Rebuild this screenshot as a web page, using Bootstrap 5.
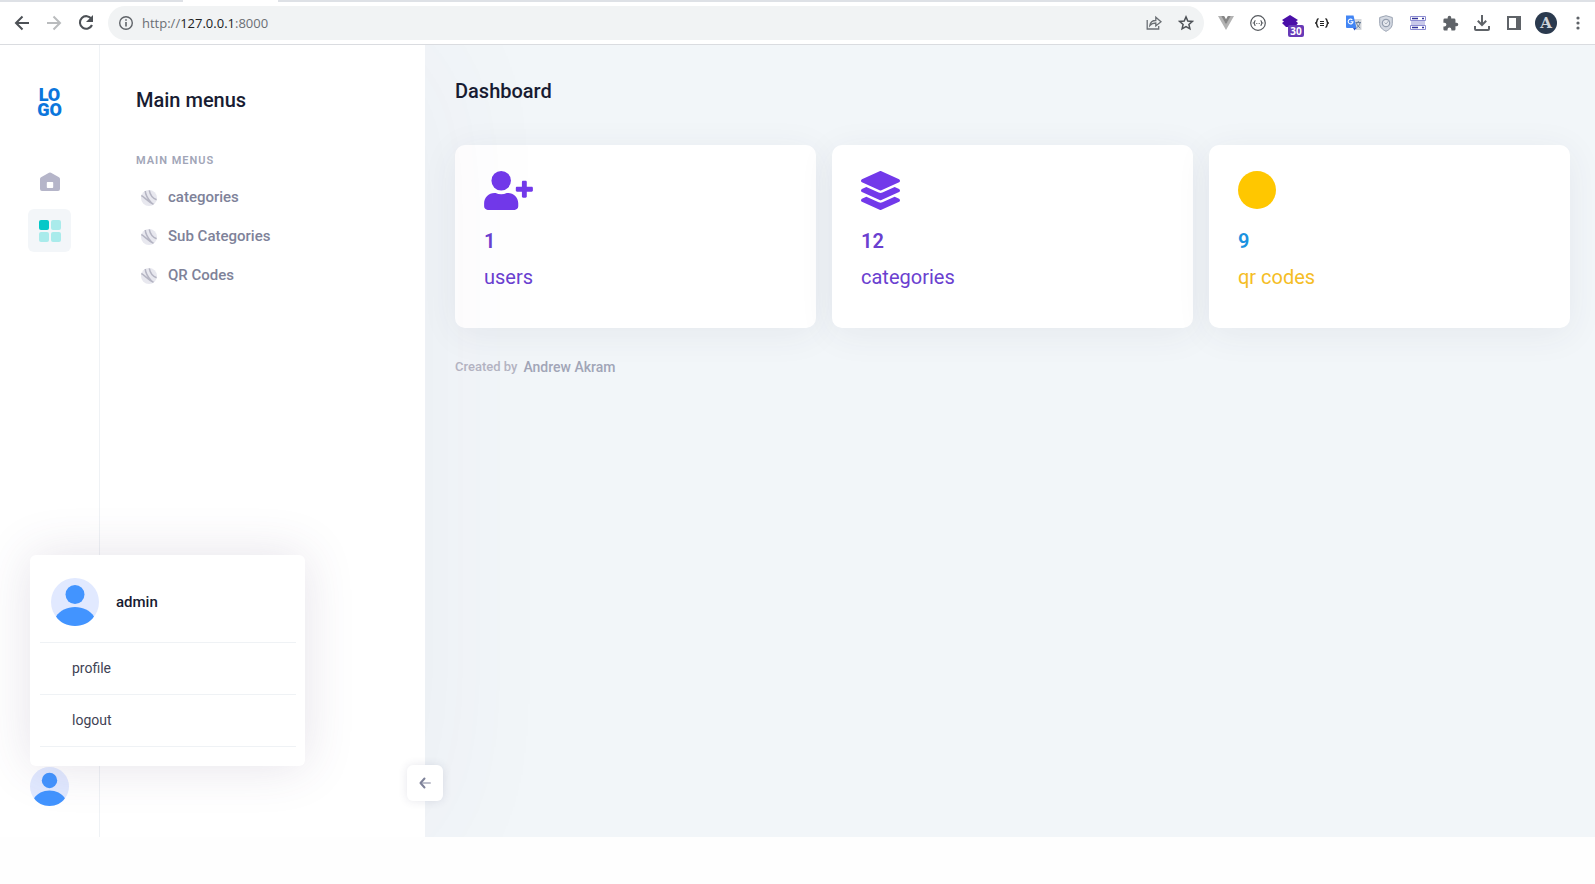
<!DOCTYPE html>
<html lang="en">
<head>
<meta charset="utf-8">
<meta name="viewport" content="width=device-width, initial-scale=1">
<title>Dashboard</title>
<link href="https://cdn.jsdelivr.net/npm/bootstrap@5.3.0/dist/css/bootstrap.min.css" rel="stylesheet">
<style>
  body { font-family: Roboto, "Liberation Sans", sans-serif; background: #fefefe; color: #181c32; }
  button { border: 0; background: none; padding: 0; color: inherit; }
  a { text-decoration: none; }

  /* browser toolbar */
  .tabstrip { height: 2px; background: #dee1e6; padding-left: 183px; }
  .tab-active { width: 95px; background: #fff; }
  .toolbar { height: 43px; background: #fff; border-bottom: 1px solid #dadce0; padding: 0 1px 0 6px; color: #5f6368; }
  .tool { width: 32px; height: 32px; flex: none; display: flex; align-items: center; justify-content: center; position: relative; }
  .address { height: 34px; margin: 0 6px; padding: 0 2px 0 10px; background: #f1f3f4; border-radius: 17px; }
  .address .url { font: 13px "Open Sans", "Noto Sans", sans-serif; margin-left: 8px; color: #6b6f74; }
  .address .url b { font-weight: 400; color: #202124; }
  .ext-count { position: absolute; left: 14px; top: 18px; width: 16px; height: 12px; border-radius: 2px; background: #673ab7; color: #fff; font: 700 10px/12px "Open Sans", sans-serif; }
  .profile-dot { width: 22px; height: 22px; border-radius: 50%; background: #2b3a4e; color: #cfd3d8; font: 700 15px/22px "DejaVu Serif", serif; }

  /* application frame */
  .app { margin-bottom: 47px; background: #f2f6f9; }
  .side { width: 425px; background: #fff; z-index: 2; box-shadow: 0 0 140px rgba(70, 60, 110, .05); clip-path: inset(0 -150px 0 0); }
  .rail { width: 100px; border-right: 1px solid #eff2f5; padding: 42px 0 31px; }
  .brand { color: #0b76dc; font-weight: 900; font-size: 18px; line-height: 15px; }
  .rail-nav { margin-top: 43px; gap: 6px; }
  .rail-btn { width: 43px; height: 43px; border-radius: 6px; display: flex; align-items: center; justify-content: center; }
  .rail-btn.active { background: #f3f6f9; }
  .menu-pane { padding: 42px 36px; }
  .page-title { font-size: 20px; line-height: 26px; font-weight: 500; margin: 0; }
  .menu-label { font-size: 11px; line-height: 14px; font-weight: 600; letter-spacing: 1px; color: #a1a5b7; margin: 41px 0 10px; }
  .menu-link { height: 39px; gap: 11px; padding-left: 5px; font-size: 15px; font-weight: 500; color: #7e8299; }

  .user-menu { left: 30px; bottom: 71px; width: 275px; height: 211px; background: #fff; border-radius: 6px; padding: 10px 9px 10px 10px; z-index: 4; box-shadow: 0 0 50px rgba(82, 63, 105, .15); }
  .user-head { height: 78px; padding: 0 11px 3px; gap: 17px; font-size: 15px; font-weight: 500; border-bottom: 1px solid #eff2f5; }
  .user-menu a { height: 52px; padding-left: 32px; font-size: 14px; color: #3f4254; border-bottom: 1px solid #eff2f5; }
  .collapse-btn { width: 36px; height: 36px; right: -18px; bottom: 36px; background: #fff; border-radius: 6px; z-index: 3; color: #7e8299; box-shadow: 0 0 10px rgba(50, 50, 93, .12); }

  .content { padding: 33px 25px 0 30px; }
  .stats { gap: 16px; margin-top: 41px; }
  .stat { height: 183px; border: 0; border-radius: 10px; padding: 26px 29px; box-shadow: 0 6px 36px rgba(60, 60, 90, .07); font-size: 20px; line-height: 26px; }
  .stat svg { display: block; height: 39px; }
  .stat .count { font-weight: 600; margin: 18px 0 10px; }
  .ink { color: #7239ea; }
  .text-violet { color: #6a40d0; }
  .text-sky { color: #1b92e0; }
  .text-gold { color: #f5bd25; }
  .credit { margin-top: 29px; font-size: 13px; line-height: 20px; font-weight: 500; color: #b5b5c3; gap: 6px; }
  .credit a { font-size: 14px; color: #a1a5b7; }
</style>
</head>
<body class="d-flex flex-column min-vh-100 overflow-hidden">

<svg width="0" height="0" class="position-absolute" aria-hidden="true">
  <symbol id="avatar" viewBox="0 0 48 48">
    <circle cx="24" cy="24" r="24" fill="#e1e9ff"/>
    <circle cx="24" cy="16.500" r="9.500" fill="#4294ff"/>
    <path d="M5 38.500C9 32.500 16 29 24 29s15 3.500 19 9.500C39 44.500 32 48 24 48S9 44.500 5 38.500z" fill="#4294ff"/>
  </symbol>
  <symbol id="ball" viewBox="0 0 16 16">
    <circle cx="8" cy="8" r="8" fill="#e8e8ef"/>
    <path d="M.3 5.500C3.500 7 6.500 11.500 12.500 14.200M4.300 1C4.300 5 7 9 10.500 13M8.300.3C9 4.500 11.500 8 15.600 9.800" fill="none" stroke="#b5b5c3" stroke-width="1.500"/>
  </symbol>
</svg>

<div class="tabstrip d-flex"><div class="tab-active"></div></div>
<header class="toolbar d-flex align-items-center">
  <button class="tool" aria-label="Back"><svg width="16" height="16" viewBox="0 0 16 16" fill="none" stroke="#4d5156" stroke-width="2"><path d="M15 8H2M8.500 1.500L2 8l6.500 6.500"/></svg></button>
  <button class="tool" aria-label="Forward"><svg width="16" height="16" viewBox="0 0 16 16" fill="none" stroke="#babcbe" stroke-width="2"><path d="M1 8h13M7.500 1.500L14 8l-6.500 6.500"/></svg></button>
  <button class="tool" aria-label="Reload"><svg width="24" height="24" viewBox="0 0 24 24" fill="none" stroke="#4d5156" stroke-width="2.100"><path d="M17.500 8A6.300 6.300 0 1 0 18 14"/><path d="M19 4v7h-7z" fill="#4d5156" stroke="none"/></svg></button>
  <div class="address d-flex align-items-center flex-grow-1">
    <svg width="16" height="16" viewBox="0 0 16 16" fill="none" stroke="#5f6368"><circle cx="8" cy="8" r="6.300" stroke-width="1.400"/><path d="M8 7v4.500M8 4.200v1.600" stroke-width="1.600"/></svg>
    <span class="url me-auto">http://<b>127.0.0.1</b>:8000</span>
    <button class="tool" aria-label="Share"><svg width="16" height="16" viewBox="0 0 16 16" fill="none" stroke="#6b6f74" stroke-width="1.300"><path d="M1.200 5v9h11.500v-3M3.800 10.500c.5-3.500 2.700-5 6-5V2.200L15 6.700l-5.200 4.200V8c-2.800 0-4.500.7-6 2.500z"/></svg></button>
    <button class="tool" aria-label="Bookmark"><svg width="16" height="16" viewBox="0 0 16 16" fill="none" stroke="#4d5156" stroke-width="1.500"><path d="M8 1.900l1.800 4.100 4.500.4-3.400 3 1 4.400L8 11.500l-3.900 2.300 1-4.400-3.400-3 4.500-.4z"/></svg></button>
  </div>
  <button class="tool" aria-label="Vue"><svg width="16" height="14" viewBox="0 0 16 14"><path d="M0 0h3.500L8 8l4.500-8H16L8 14z" fill="#b3b3b3"/><path d="M3.200 0h3L8 3.200 9.800 0h3L8 8.500z" fill="#858585"/></svg></button>
  <button class="tool" aria-label="JSON"><svg width="16" height="16" viewBox="0 0 16 16" fill="none" stroke="#55595e"><circle cx="8" cy="8" r="7.300" stroke-width="1.200"/><path d="M5.500 5.500c-1.500 0-.3 2-1.700 2.500 1.400.5.200 2.500 1.700 2.500M10.500 5.500c1.500 0 .3 2 1.700 2.500-1.400.5-.2 2.500-1.700 2.500" stroke-width="1.200"/><path d="M6.300 8.500h1M8.700 8.500h1"/></svg></button>
  <button class="tool" aria-label="Layers, 30"><svg width="18" height="18" viewBox="0 0 18 18" fill="#4a0fa8"><path d="M9 1l8 5-2 1.300L17 9l-3 4H5l-4-4 2-1.500L1 6z"/></svg><span class="ext-count">30</span></button>
  <button class="tool" aria-label="Braces"><svg width="14" height="10" viewBox="0 0 14 10" fill="none" stroke="#222"><path d="M3.600.8C.9.800 3 4.200.8 5c2.200.8.1 4.200 2.800 4.200M10.400.8c2.700 0 .6 3.400 2.800 4.200-2.200.8-.1 4.200-2.800 4.200" stroke-width="1.500"/><path d="M5 3.500h4M5 5.500h4M5 7.500h4" stroke-width="1"/></svg></button>
  <button class="tool" aria-label="Translate"><svg width="16" height="16" viewBox="0 0 16 16"><path d="M7 4h8.500v11H10z" fill="#d5d8dc"/><path d="M9.500 7.500H15M12.300 6v1.500M10.500 8c.8 2.300 2 3.800 3.800 5M14 8c-.5 2-2 4-3.500 5" stroke="#6b7f99" fill="none"/><path d="M0 .5h7.500L10.500 13H1a1 1 0 0 1-1-1z" fill="#4285f4"/><path d="M7 13h3.500L8.500 15.500z" fill="#2a56c6"/><path d="M6.300 4.800A2.400 2.400 0 1 0 7 6.700H4.600" fill="none" stroke="#fff" stroke-width="1.100"/></svg></button>
  <button class="tool" aria-label="Shield"><svg width="14" height="17" viewBox="0 0 14 17"><path d="M7 .7l6.300 1.800v6c0 3.500-2.500 6-6.300 7.800C3.200 14.500.7 12 .7 8.500v-6z" fill="#d4d9e2" stroke="#9aa3b2"/><circle cx="7" cy="8" r="3.700" fill="#e6e9ee" stroke="#939dae" stroke-width="1.200"/><path d="M5.500 7.500L7 9l3-3.500" fill="none" stroke="#a5adba"/></svg></button>
  <button class="tool" aria-label="Server"><svg width="16" height="14" viewBox="0 0 16 14"><path d="M.5.5h15v4H.5zM.5 9.500h15v4H.5z" fill="#fff" stroke="#8b8bd0"/><path d="M1 5h14v4H1z" fill="#c9c9ea"/><path d="M2 2.500h6M2 11.500h6M12 2.500h2M12 11.500h2" stroke="#34349c" stroke-width="1.300"/></svg></button>
  <button class="tool" aria-label="Extensions"><svg width="17" height="17" viewBox="0 0 24 24" fill="#5f6368"><path d="M20.500 11H19V7a2 2 0 0 0-2-2h-4V3.500a2.500 2.500 0 0 0-5 0V5H4a2 2 0 0 0-2 2v3.800h1.500a2.700 2.700 0 0 1 0 5.400H2V20c0 1.100.9 2 2 2h3.800v-1.500a2.700 2.700 0 0 1 5.400 0V22H17a2 2 0 0 0 2-2v-4h1.500a2.500 2.500 0 0 0 0-5z"/></svg></button>
  <button class="tool" aria-label="Downloads"><svg width="16" height="16" viewBox="0 0 16 16" fill="none" stroke="#5f6368" stroke-width="2"><path d="M8 0v9.500M3.800 5.800L8 10l4.200-4.200M1 11v3a1 1 0 0 0 1 1h12a1 1 0 0 0 1-1v-3"/></svg></button>
  <button class="tool" aria-label="Side panel"><svg width="14" height="14" viewBox="0 0 14 14"><path d="M1 1h12v12H1z" fill="#fff" stroke="#5f6368" stroke-width="2"/><path d="M9 1h4v12H9z" fill="#5f6368"/></svg></button>
  <button class="tool" aria-label="Account"><span class="profile-dot">A</span></button>
  <button class="tool" aria-label="More"><svg width="4" height="14" viewBox="0 0 4 14" fill="#5f6368"><circle cx="2" cy="2" r="1.600"/><circle cx="2" cy="7" r="1.600"/><circle cx="2" cy="12" r="1.600"/></svg></button>
</header>

<div class="app d-flex flex-grow-1 position-relative">
  <aside class="side d-flex flex-shrink-0 position-relative">
    <nav class="rail d-flex flex-column align-items-center flex-shrink-0">
      <a href="#" class="brand text-center">LO<br>GO</a>
      <div class="rail-nav d-flex flex-column">
        <a href="#" class="rail-btn" aria-label="Home"><svg width="20" height="20" viewBox="0 0 20 20"><path d="M9 .7a2 2 0 0 1 2 0l8 4.500a2 2 0 0 1 1 1.700V17a2 2 0 0 1-2 2H2a2 2 0 0 1-2-2V6.900a2 2 0 0 1 1-1.700zM7.500 10a.7.700 0 0 0-.7.700v4.600c0 .4.300.7.700.7h5c.4 0 .7-.3.700-.7v-4.600a.7.700 0 0 0-.7-.7z" fill="#b5b5c9" fill-rule="evenodd"/></svg></a>
        <a href="#" class="rail-btn active" aria-label="Menus"><svg width="22" height="22" viewBox="0 0 22 22" fill="#a9ebeb"><rect width="10" height="10" rx="2" fill="#04c8c8"/><rect x="12" width="10" height="10" rx="2"/><rect y="12" width="10" height="10" rx="2"/><rect x="12" y="12" width="10" height="10" rx="2"/></svg></a>
      </div>
      <button class="mt-auto" aria-label="Account menu"><svg class="d-block" width="39" height="39"><use href="#avatar"/></svg></button>
    </nav>
    <div class="menu-pane flex-grow-1">
      <h2 class="page-title">Main menus</h2>
      <div class="menu-label">MAIN MENUS</div>
      <a href="#" class="menu-link d-flex align-items-center"><svg width="16" height="16"><use href="#ball"/></svg>categories</a>
      <a href="#" class="menu-link d-flex align-items-center"><svg width="16" height="16"><use href="#ball"/></svg>Sub Categories</a>
      <a href="#" class="menu-link d-flex align-items-center"><svg width="16" height="16"><use href="#ball"/></svg>QR Codes</a>
    </div>
    <button class="collapse-btn position-absolute d-flex align-items-center justify-content-center" aria-label="Collapse menu"><svg width="12" height="12" viewBox="0 0 12 12" fill="none" stroke="currentColor" stroke-width="2" stroke-linecap="round" stroke-linejoin="round"><path d="M3 6h8" stroke-opacity=".5"/><path d="M5.500 1.500L1.500 6l4 4.500"/></svg></button>
    <div class="user-menu position-absolute">
      <div class="user-head d-flex align-items-center"><svg width="48" height="48"><use href="#avatar"/></svg>admin</div>
      <a href="#" class="d-flex align-items-center">profile</a>
      <a href="#" class="d-flex align-items-center">logout</a>
    </div>
  </aside>

  <main class="content flex-grow-1">
    <h1 class="page-title">Dashboard</h1>
    <div class="stats d-flex">
      <div class="card stat flex-fill w-100">
        <svg class="ink" width="49" viewBox="0 0 640 512" fill="currentColor"><circle cx="224" cy="128" r="128"/><path d="M314 288h-17c-22 10-47 16-73 16s-50-6-73-16h-17C60 288 0 348 0 422v42c0 26 22 48 48 48h352c26 0 48-22 48-48v-42c0-74-60-134-134-134zM624 208h-64v-64c0-9-7-16-16-16h-32c-9 0-16 7-16 16v64h-64c-9 0-16 7-16 16v32c0 9 7 16 16 16h64v64c0 9 7 16 16 16h32c9 0 16-7 16-16v-64h64c9 0 16-7 16-16v-32c0-9-7-16-16-16z"/></svg>
        <div class="count text-violet">1</div>
        <div class="text-violet">users</div>
      </div>
      <div class="card stat flex-fill w-100">
        <svg class="ink" width="39" viewBox="0 0 512 512" fill="currentColor"><path d="M12 149l232 105c8 3 16 3 24 0l232-105c16-7 16-34 0-41L268 3c-8-4-16-4-24 0L12 108c-16 7-16 34 0 41z"/><path id="tier" d="M500 236l-58-26-161 73c-16 7-34 7-50 0L70 210l-58 26c-16 7-16 33 0 40l232 105c8 4 16 4 24 0l232-105c16-7 16-33 0-40z"/><use href="#tier" y="128"/></svg>
        <div class="count text-violet">12</div>
        <div class="text-violet">categories</div>
      </div>
      <div class="card stat flex-fill w-100">
        <svg width="38" viewBox="0 0 38 39"><circle cx="19" cy="19" r="19" fill="#ffc700"/></svg>
        <div class="count text-sky">9</div>
        <div class="text-gold">qr codes</div>
      </div>
    </div>
    <footer class="credit d-flex"><span>Created by</span><a href="#">Andrew Akram</a></footer>
  </main>
</div>

<script src="https://cdn.jsdelivr.net/npm/bootstrap@5.3.0/dist/js/bootstrap.bundle.min.js"></script>
</body>
</html>
